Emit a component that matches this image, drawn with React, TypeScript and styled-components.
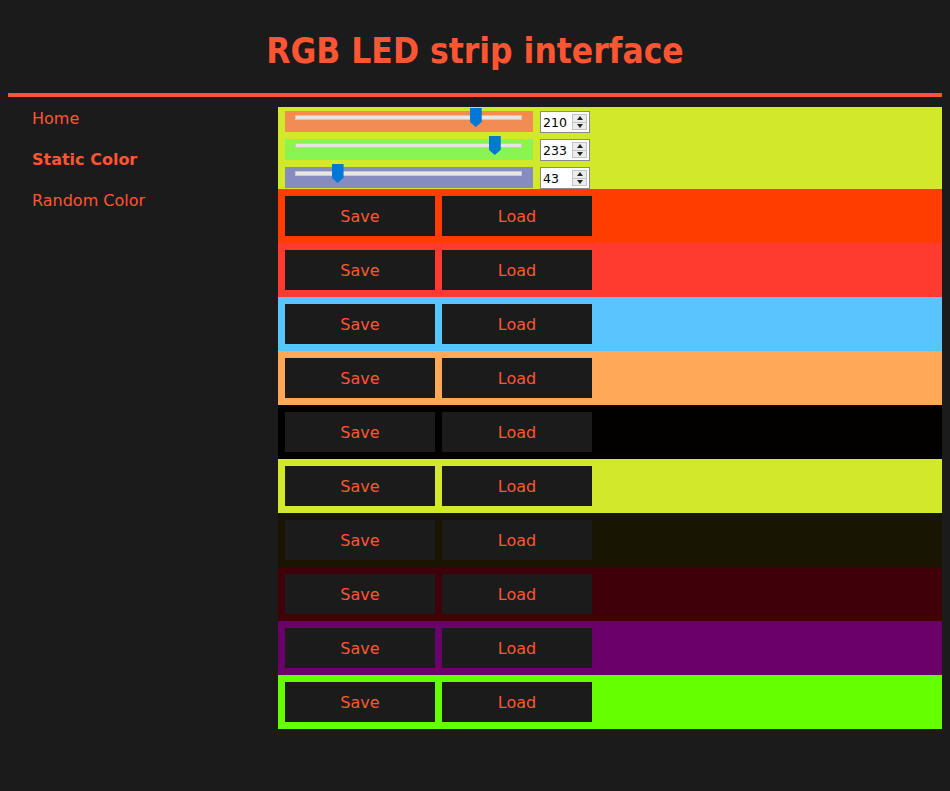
import React from "react";
import styled, { createGlobalStyle } from "styled-components";

const GlobalStyle = createGlobalStyle`
  html, body { background: #1b1b1b; }
  body {
    margin: 8px;
    font-family: "DejaVu Sans", "Liberation Sans", sans-serif;
    color: #ff5533;
  }
`;

const Header = styled.header`
  height: 85px;
  display: flex;
  align-items: center;
  justify-content: center;
  border-bottom: 4px solid #ff5533;
`;

const Title = styled.h1`
  margin: 0;
  font-family: "DejaVu Sans Condensed", "DejaVu Sans", sans-serif;
  font-weight: bold;
  font-size: 35px;
  color: #ff5533;
`;

const Layout = styled.div`
  display: flex;
  align-items: flex-start;
`;

const Sidebar = styled.nav`
  width: 270px;
  flex: none;
  display: flex;
  flex-direction: column;
  padding-top: 1px;
`;

const NavItem = styled.a<{ $active?: boolean }>`
  height: 41px;
  display: flex;
  align-items: center;
  padding-left: 24px;
  font-size: 16px;
  color: #ff5533;
  text-decoration: none;
  font-weight: ${(p) => (p.$active ? "bold" : "normal")};
`;

const Main = styled.main`
  flex: 1;
  margin-top: 10px;
  display: flex;
  flex-direction: column;
`;

const SliderPanel = styled.section<{ $bg: string }>`
  background: ${(p) => p.$bg};
  padding: 4px 7px 0;
  display: flex;
  flex-direction: column;
  gap: 6px;
`;

const SliderRow = styled.div`
  display: flex;
  align-items: flex-start;
  gap: 7px;
  height: 22px;
`;

const SliderBox = styled.div<{ $bg: string }>`
  position: relative;
  width: 248px;
  height: 21px;
  background: ${(p) => p.$bg};
`;

const Track = styled.div`
  position: absolute;
  left: 10px;
  right: 11px;
  top: 4px;
  height: 3px;
  background: #e6e6e6;
  border: 1px solid #c9c9c9;
`;

const Thumb = styled.div`
  position: absolute;
  top: -3px;
  width: 12px;
  height: 19px;
  margin-left: -6px;
  background: #0078d7;
  clip-path: polygon(0 0, 100% 0, 100% 72%, 50% 100%, 0 72%);
`;

const NumberBox = styled.div`
  width: 50px;
  height: 22px;
  box-sizing: border-box;
  border: 1px solid #8a8a8a;
  background: #fff;
  display: flex;
  align-items: center;
  padding-left: 2px;
  padding-right: 2px;
  font-family: "DejaVu Sans", sans-serif;
  font-size: 12.5px;
  color: #000;
`;

const NumberText = styled.span`
  flex: 1;
`;

const Spinner = styled.div`
  width: 15px;
  height: 16px;
  display: flex;
  flex-direction: column;
  border: 1px solid #c4c4c4;
  box-sizing: border-box;
`;

const SpinBtn = styled.div`
  flex: 1;
  background: #ececec;
  display: flex;
  align-items: center;
  justify-content: center;
  & + & { border-top: 1px solid #c4c4c4; }
`;

const Arrow = styled.div<{ $down?: boolean }>`
  width: 0;
  height: 0;
  border-left: 3.5px solid transparent;
  border-right: 3.5px solid transparent;
  ${(p) =>
    p.$down ? "border-top: 4px solid #222;" : "border-bottom: 4px solid #222;"}
`;

const ColorRow = styled.div<{ $bg: string }>`
  background: ${(p) => p.$bg};
  height: 54px;
  box-sizing: border-box;
  padding: 7px;
  display: flex;
  gap: 7px;
`;

const ActionButton = styled.button`
  width: 150px;
  height: 40px;
  border: none;
  background: #1b1b1b;
  color: #ff5533;
  font-family: "DejaVu Sans", sans-serif;
  font-size: 16px;
  padding: 0;
  cursor: pointer;
`;

const channels = [
  { value: 210, bg: "#f28c55" },
  { value: 233, bg: "#88f552" },
  { value: 43, bg: "#878cc0" },
];

const rows = [
  "#ff3d00",
  "#ff3b30",
  "#5ac4ff",
  "#ffa858",
  "#030000",
  "#d2e82b",
  "#181602",
  "#40000a",
  "#6c006a",
  "#66ff00",
];

function Slider({ value, bg }: { value: number; bg: string }) {
  const left = 17 + (value / 255) * 211;
  return (
    <SliderRow>
      <SliderBox $bg={bg}>
        <Track />
        <Thumb style={{ left: `${left}px` }} />
      </SliderBox>
      <NumberBox>
        <NumberText>{value}</NumberText>
        <Spinner>
          <SpinBtn>
            <Arrow />
          </SpinBtn>
          <SpinBtn>
            <Arrow $down />
          </SpinBtn>
        </Spinner>
      </NumberBox>
    </SliderRow>
  );
}

export default function App() {
  return (
    <>
      <GlobalStyle />
      <Header>
        <Title>RGB LED strip interface</Title>
      </Header>
      <Layout>
        <Sidebar>
          <NavItem href="#">Home</NavItem>
          <NavItem href="#" $active>
            Static Color
          </NavItem>
          <NavItem href="#">Random Color</NavItem>
        </Sidebar>
        <Main>
          <SliderPanel $bg="rgb(210,233,43)">
            {channels.map((c, i) => (
              <Slider key={i} value={c.value} bg={c.bg} />
            ))}
          </SliderPanel>
          {rows.map((bg, i) => (
            <ColorRow key={i} $bg={bg}>
              <ActionButton>Save</ActionButton>
              <ActionButton>Load</ActionButton>
            </ColorRow>
          ))}
        </Main>
      </Layout>
    </>
  );
}
